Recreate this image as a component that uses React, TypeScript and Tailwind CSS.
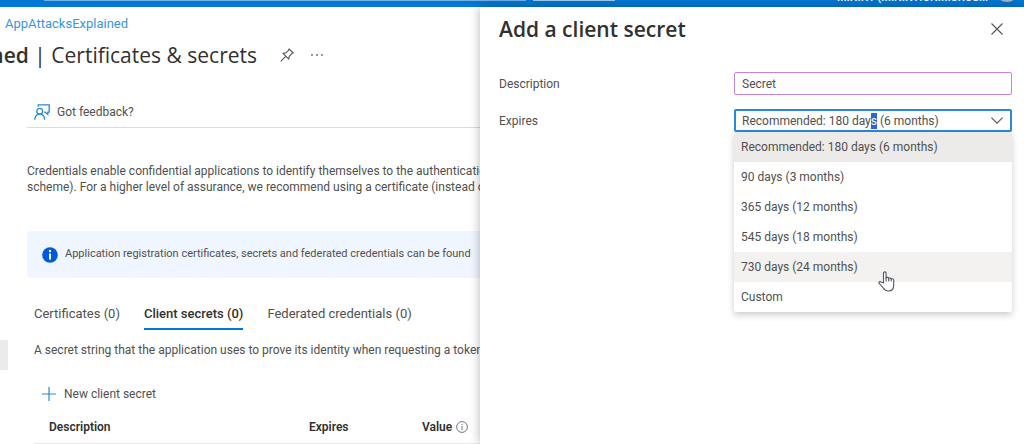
import { useState } from "react";

const OPTIONS = [
  "Recommended: 180 days (6 months)",
  "90 days (3 months)",
  "365 days (12 months)",
  "545 days (18 months)",
  "730 days (24 months)",
  "Custom",
];

function FeedbackIcon() {
  return (
    <svg width="16" height="16" viewBox="0 0 16 16" fill="none" stroke="#2b88d8" strokeWidth="1.3" aria-hidden="true">
      <path d="M4.200 2.800V.8h11v7.400h-1.400v2.200L11.200 8.200H10" />
      <circle cx="5.700" cy="7.300" r="2.900" />
      <path d="M.7 15.600c.3-3.200 2.300-5.400 5-5.400s4.700 2.200 5 5.400" />
    </svg>
  );
}

function PinIcon() {
  return (
    <svg width="14" height="14" viewBox="0 0 14 14" fill="none" stroke="#555" strokeWidth="1.1" strokeLinejoin="round" aria-hidden="true">
      <path d="M9 .8l4.200 4.200-1.200.3-2.800 3-.4 2.900L3 5.300l2.800-.4 3-2.800z" />
      <path d="M5.700 8.300L.7 13.300" />
    </svg>
  );
}

function HandCursor() {
  return (
    <svg width="17" height="21" viewBox="0 0 17 21" fill="#fff" stroke="#555563" strokeWidth="1.1" strokeLinejoin="round" strokeLinecap="round" aria-hidden="true">
      <path d="M5.500 12V2.200a1.300 1.300 0 0 1 2.600 0V7c.3-1 2.500-.8 2.600.5.5-.9 2.300-.6 2.500.6.6-.7 2.400-.3 2.500 1V14c0 3.400-1.700 6-5.200 6-3 0-4-1-5.200-3L1 12.200c-.5-1.300 1-2 2-1.200z" />
      <path d="M8.100 7v3M10.700 7.500V10M13.200 8.200V10" />
    </svg>
  );
}

function TopBar() {
  return (
    <header className="flex h-[7px] items-end overflow-hidden bg-[#0078d4] pr-[5px] text-white">
      <div className="mb-[6px] ml-[44px] h-4 min-w-0 flex-1 bg-[#71b1e8]" />
      <div className="mr-[222px] mb-[6px] ml-[7px] h-4 w-[82px] shrink-0 bg-[#9bcbf0]" />
      <span className="mb-px w-[158px] shrink-0 text-[11px] leading-4 font-medium whitespace-nowrap">MININT (MININTIONMICROS...</span>
      <span className="mb-[5px] size-6 shrink-0 rounded-full bg-[#a9b7c4]" />
    </header>
  );
}

function Tabs() {
  return (
    <div role="tablist" className="mt-[22px] flex gap-6 pl-[7px] text-[13px]">
      <button role="tab" aria-selected="false" className="h-[30px] border-b-2 border-transparent">Certificates (0)</button>
      <button role="tab" aria-selected="true" className="h-[30px] border-b-2 border-[#0078d4] font-medium text-[#323130]">Client secrets (0)</button>
      <button role="tab" aria-selected="false" className="h-[30px] border-b-2 border-transparent">Federated credentials (0)</button>
    </div>
  );
}

function SecretsPage() {
  return (
    <main className="relative pt-[7px] whitespace-nowrap">
      <a href="#" className="ml-[5px] block text-[13px] leading-5 text-[#3a96dd]">AppAttacksExplained</a>
      <div className="flex h-[42px] items-center">
        <h1 className="flex w-[257px] shrink-0 justify-end font-['Open_Sans','Noto_Sans',sans-serif] text-[21px] leading-8 text-[#323130]">
          <b className="font-semibold">ned</b>&nbsp;| Certificates &amp; secrets
        </h1>
        <button aria-label="Pin" className="ml-[23px]"><PinIcon /></button>
        <button aria-label="More" className="ml-[17px] flex gap-[3px]">
          <i className="size-[2px] rounded-full bg-[#777]" />
          <i className="size-[2px] rounded-full bg-[#777]" />
          <i className="size-[2px] rounded-full bg-[#777]" />
        </button>
      </div>
      <div className="ml-[27px]">
        <div className="mt-5 flex h-8 items-center border-b border-[#dddcdb] pl-[7px]">
          <button className="flex items-center gap-[7px] text-xs"><FeedbackIcon />Got feedback?</button>
        </div>
        <p className="mt-[35px] text-xs leading-4">
          Credentials enable confidential applications to identify themselves to the authentication service when receiving tokens<br />
          scheme). For a higher level of assurance, we recommend using a certificate (instead of a client secret) as a credential.
        </p>
        <div className="mt-9 flex h-[47px] items-center gap-[7px] rounded-sm bg-[#f0f6ff] pl-[15px] text-[11px]">
          <svg width="16" height="16" viewBox="0 0 16 16" aria-hidden="true">
            <circle cx="8" cy="8" r="7.800" fill="#015cda" />
            <path d="M7 6.500h2V12.500H7z" fill="#fff" />
            <circle cx="8" cy="4" r="1.200" fill="#fff" />
          </svg>
          Application registration certificates, secrets and federated credentials can be found
        </div>
        <Tabs />
        <p className="mt-[10px] pl-[7px] text-xs leading-5">A secret string that the application uses to prove its identity when requesting a token. Also can be referred to as application password.</p>
        <button className="mt-6 ml-[15px] flex h-5 items-center gap-2 text-xs">
          <svg width="14" height="14" viewBox="0 0 14 14" stroke="#2b88d8" strokeWidth="1.200" aria-hidden="true"><path d="M7 0v14M0 7h14" /></svg>
          New client secret
        </button>
        <table className="mt-[7px] ml-[7px] w-full table-fixed text-left text-xs text-[#323130]">
          <thead>
            <tr className="h-8 border-b border-[#eae9e8]">
              <th className="w-[275px] pl-[15px] font-semibold">Description</th>
              <th className="w-[113px] font-semibold">Expires</th>
              <th className="font-semibold">
                <span className="flex items-center gap-1">Value
                  <svg width="12" height="12" viewBox="0 0 12 12" fill="none" stroke="#777" aria-hidden="true"><circle cx="6" cy="6" r="5.400" /><path d="M6 5v4M6 3v1" /></svg>
                </span>
              </th>
            </tr>
          </thead>
        </table>
      </div>
      <div className="absolute top-[333px] left-0 h-[30px] w-2 bg-[#edebe9]" />
    </main>
  );
}

function SecretPanel() {
  const [description, setDescription] = useState("Secret");
  return (
    <aside className="absolute top-[7px] right-0 bottom-0 w-[544px] max-w-full bg-white pr-3 pl-[19px] shadow-[0_0_10px_rgba(0,0,0,0.3)]">
      <div className="flex h-11 items-center justify-between pr-[9px]">
        <h2 className="font-['Open_Sans','Noto_Sans',sans-serif] text-[21px] leading-8 font-semibold text-[#323130]">Add a client secret</h2>
        <button aria-label="Close">
          <svg width="12" height="12" viewBox="0 0 12 12" stroke="#555" strokeWidth="1.100" aria-hidden="true"><path d="M.5.5l11 11M11.500.5l-11 11" /></svg>
        </button>
      </div>
      <div className="mt-[21px] flex items-center">
        <label htmlFor="description" className="w-[235px] shrink-0 text-xs">Description</label>
        <input id="description" value={description} onChange={(e) => setDescription(e.target.value)} className="h-[23px] min-w-0 flex-1 rounded-xs border border-[#c586d9] px-[7px] text-xs outline-none" />
      </div>
      <div className="mt-[14px] flex items-center">
        <span id="expires" className="w-[235px] shrink-0 text-xs">Expires</span>
        <div className="relative min-w-0 flex-1">
          <button role="combobox" aria-expanded="true" aria-controls="expires-list" aria-labelledby="expires" className="flex h-[23px] w-full items-center justify-between rounded-xs border-2 border-[#2b88d8] pr-[7px] pl-[6px] text-xs">
            <span>Recommended: 180 day<mark className="bg-[#2f63d6] py-px text-white">s</mark> (6 months)</span>
            <svg width="12" height="7" viewBox="0 0 12 7" fill="none" stroke="#555" strokeWidth="1.100" aria-hidden="true"><path d="M.4.6L6 6.200 11.600.6" /></svg>
          </button>
          <ul id="expires-list" role="listbox" className="absolute top-full right-0 left-0 rounded-xs bg-white text-xs shadow-[0_3px_7px_rgba(0,0,0,0.2)]">
            {OPTIONS.map((option, i) => (
              <li key={option} role="option" aria-selected={i === 0} className={`flex h-[30px] items-center pl-[7px] ${i === 0 ? "bg-[#edebe9]" : i === 4 ? "bg-[#f3f2f1]" : ""}`}>
                {option}
              </li>
            ))}
          </ul>
          <div className="pointer-events-none absolute top-[162px] left-[144px]"><HandCursor /></div>
        </div>
      </div>
    </aside>
  );
}

export default function App() {
  return (
    <div className="relative min-h-screen overflow-hidden bg-white font-['Roboto','Open_Sans',sans-serif] text-[#505050]">
      <TopBar />
      <SecretsPage />
      <SecretPanel />
    </div>
  );
}
